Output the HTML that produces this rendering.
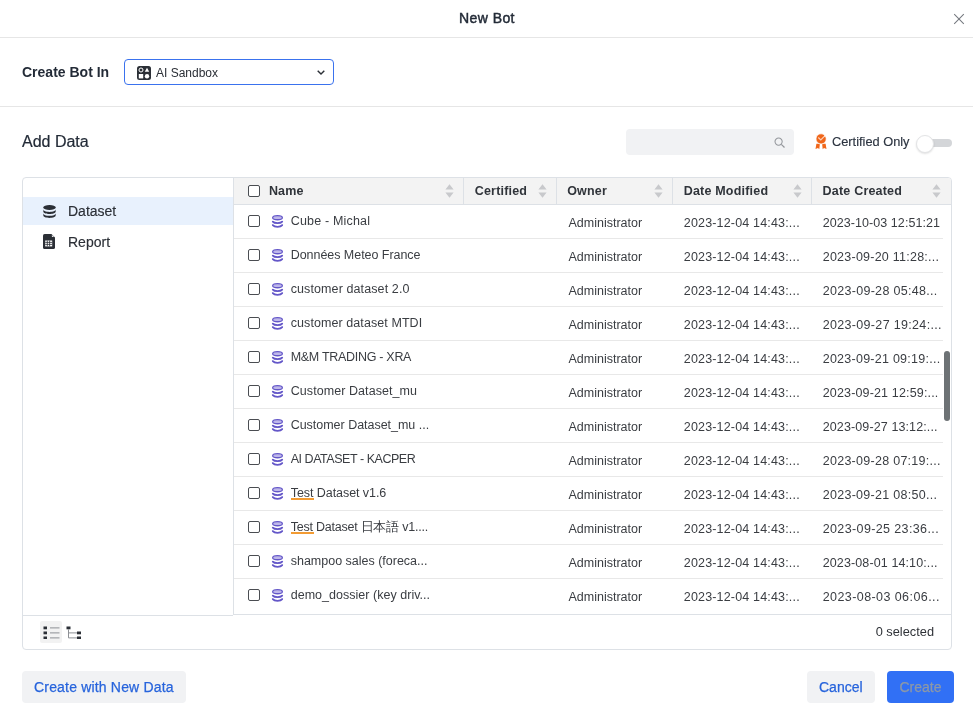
<!DOCTYPE html>
<html><head><meta charset="utf-8">
<style>
*{box-sizing:border-box;margin:0;padding:0}
html,body{width:973px;height:719px;overflow:hidden;background:#fff;font-family:"Liberation Sans",sans-serif;color:#2b2f36}
.a{position:absolute;white-space:nowrap}
.hdr-line{position:absolute;left:0;top:37px;width:973px;height:1px;background:#e6e6e6}
.title{left:0.5px;width:973px;text-align:center;top:10px;font-size:14px;font-weight:400;-webkit-text-stroke:0.45px currentColor;letter-spacing:0.42px;color:#232b37;line-height:16px}
.sec-line{position:absolute;left:0;top:106px;width:973px;height:1px;background:#e6e6e6}
.lbl{left:22px;top:63px;font-size:14px;font-weight:700;color:#232b37;line-height:18px}
.sel{position:absolute;left:124px;top:59px;width:210px;height:26px;border:1.5px solid #3a72ee;border-radius:4px;background:#fff}
.seltxt{left:156px;top:66px;font-size:12px;color:#2b2f36;line-height:15px}
.adddata{left:22px;top:132px;font-size:16px;color:#232b37;line-height:19px;-webkit-text-stroke:0.2px currentColor}
.search{position:absolute;left:626px;top:129px;width:168px;height:26px;background:#f1f2f4;border-radius:4px}
.cert{left:832px;top:134px;font-size:12.8px;color:#2c3440;line-height:15px;-webkit-text-stroke:0.15px currentColor}
.toggle-track{position:absolute;left:921px;top:139px;width:31px;height:8px;border-radius:4px;background:#d4d6d9}
.toggle-knob{position:absolute;left:916px;top:134.5px;width:18px;height:18px;border-radius:50%;background:#fff;border:1px solid #e3e4e6;box-shadow:0 1px 2px rgba(0,0,0,.12)}
.panel{position:absolute;left:22px;top:177px;width:930px;height:473px;border:1px solid #dde1e6;border-radius:4px;overflow:hidden}
.side-hl{position:absolute;left:0px;top:19px;width:210px;height:28px;background:#e8f1fd}
.side-txt{font-size:14px;color:#2b2f36;line-height:16px;-webkit-text-stroke:0.15px currentColor}
.vdiv{position:absolute;left:210px;top:0;width:1px;height:437px;background:#dde1e6}
.thead{position:absolute;left:211px;top:0;width:718px;height:27px;background:#f3f3f3;border-bottom:1px solid #dde1e6}
.th{font-size:12.5px;font-weight:700;color:#30343a;line-height:14px;top:6.3px;letter-spacing:0.2px}
.colsep{position:absolute;top:0;width:1px;height:26px;background:#dde1e6}
.sort{position:absolute;top:6px;width:9px;height:14px}
.row{position:absolute;left:211px;width:709px;height:1px;background:#e8e8e8}
.cb{position:absolute;width:12px;height:12px;border:1.3px solid #4a4d52;border-radius:2px;background:#fff}
.td{font-size:12.5px;color:#3a3d42;line-height:14px}
.nm{font-size:12.5px;color:#3a3d42;line-height:14px}
.foot-line{position:absolute;left:0;top:437px;width:210px;height:1px;background:#dde1e6}
.foot-line2{position:absolute;left:210px;top:436px;width:720px;height:1px;background:#dde1e6}
.btn2{position:absolute;background:#f1f2f4;border-radius:4px}
.btxt{font-size:14px;color:#2764dc;line-height:16px;-webkit-text-stroke:0.25px currentColor}
.primary{position:absolute;left:887px;top:671px;width:67px;height:32px;background:#3170f5;border-radius:4px}
</style></head>
<body>
<div id="root" style="position:absolute;left:0;top:0;width:973px;height:719px;background:#fff;will-change:transform">
<div class="a title">New Bot</div>
<svg class="a" style="left:953px;top:13px" width="12" height="12" viewBox="0 0 12 12"><path d="M1.2 1.2L10.8 10.8M10.8 1.2L1.2 10.8" stroke="#75797f" stroke-width="1.05" fill="none"/></svg>
<div class="hdr-line"></div>

<div class="a lbl">Create Bot In</div>
<div class="sel"></div>
<svg class="a" style="left:137px;top:66px" width="14" height="14" viewBox="0 0 14 14">
<rect x="0" y="0" width="14" height="14" rx="2.5" fill="#2b2f36"/>
<circle cx="4" cy="4" r="2" fill="none" stroke="#fff" stroke-width="1"/>
<path d="M10 1.8L12.2 5.8H7.8Z" fill="#fff"/>
<rect x="1.8" y="8" width="4.4" height="4.4" fill="#fff"/>
<circle cx="10" cy="10.2" r="2.2" fill="#fff"/>
</svg>
<div class="a seltxt">AI Sandbox</div>
<svg class="a" style="left:317px;top:70px" width="8" height="5" viewBox="0 0 8 5"><path d="M0.7 0.7L4 4L7.3 0.7" stroke="#2b2f36" stroke-width="1.4" fill="none"/></svg>
<div class="sec-line"></div>

<div class="a adddata">Add Data</div>
<div class="search"></div>
<svg class="a" style="left:774px;top:137px" width="11" height="11" viewBox="0 0 11 11"><circle cx="4.6" cy="4.6" r="3.6" fill="none" stroke="#94979c" stroke-width="1.05"/><path d="M7.3 7.3L10.5 10.5" stroke="#94979c" stroke-width="1.2"/></svg>
<svg class="a" style="left:815px;top:133px" width="12" height="17" viewBox="0 0 12 17"><path d="M1.4 10.8H4.9L4.3 16.2L3 14.9L0.5 16Z M7.1 10.8H10.6L11.5 16L9 14.9L7.7 16.2Z" fill="#f0661a"/><circle cx="6.1" cy="5.9" r="5.1" fill="#f0661a" stroke="#fff" stroke-width="0.7"/><path d="M3.3 4.5L5.8 7L10.6 2.2" stroke="#fbd0ba" stroke-width="1.2" fill="none"/><path d="M9.4 3.4L11.2 1.6" stroke="#fff" stroke-width="1.2"/></svg>
<div class="a cert">Certified Only</div>
<div class="toggle-track"></div>
<div class="toggle-knob"></div>

<div class="panel">
  <div class="side-hl"></div>
  <svg class="a" style="left:20px;top:27px" width="13" height="13" viewBox="0 0 13 13"><ellipse cx="6.5" cy="2.6" rx="6.2" ry="2.5" fill="#2b2f36"/><path d="M0.3 4.3C0.3 6 3 6.9 6.5 6.9S12.7 6 12.7 4.3V6.4C12.7 8 10 8.9 6.5 8.9S0.3 8 0.3 6.4Z" fill="#2b2f36"/><path d="M0.3 8.2C0.3 9.9 3 10.8 6.5 10.8S12.7 9.9 12.7 8.2V10.3C12.7 12 10 12.9 6.5 12.9S0.3 12 0.3 10.3Z" fill="#2b2f36"/></svg>
  <div class="a side-txt" style="left:45px;top:25px">Dataset</div>
  <svg class="a" style="left:20px;top:56px" width="12" height="15" viewBox="0 0 12 15"><path d="M1.6 0H8.4L12 3.6V13.4Q12 15 10.4 15H1.6Q0 15 0 13.4V1.6Q0 0 1.6 0Z" fill="#2b2f36"/><path d="M8.9 0.9L11.1 3.1H9.6Q8.9 3.1 8.9 2.4Z" fill="#e9eaec"/><rect x="2.2" y="6.5" width="7" height="5.9" fill="#fff"/><path d="M4.3 6.5V12.4M6.6 6.5V12.4M2.2 8.4H9.2M2.2 10.4H9.2" stroke="#2b2f36" stroke-width="0.8"/></svg>
  <div class="a side-txt" style="left:45px;top:56px">Report</div>
  <div class="vdiv"></div>
  <div class="foot-line"></div><div class="foot-line2"></div>
  <div class="thead"></div>
  <div id="tbl"><div class="a cb" style="left:225px;top:7px"></div>
<div class="a th" style="left:245.9px">Name</div>
<svg class="a sort" style="left:422.3px" width="9" height="14" viewBox="0 0 9 14"><path d="M4.5 0.3L8.6 5.6H0.4Z M4.5 13.7L8.6 8.4H0.4Z" fill="#c8c9cc"/></svg>
<div class="a th" style="left:451.7px">Certified</div>
<svg class="a sort" style="left:515.0px" width="9" height="14" viewBox="0 0 9 14"><path d="M4.5 0.3L8.6 5.6H0.4Z M4.5 13.7L8.6 8.4H0.4Z" fill="#c8c9cc"/></svg>
<div class="a th" style="left:544.2px">Owner</div>
<svg class="a sort" style="left:630.9px" width="9" height="14" viewBox="0 0 9 14"><path d="M4.5 0.3L8.6 5.6H0.4Z M4.5 13.7L8.6 8.4H0.4Z" fill="#c8c9cc"/></svg>
<div class="a th" style="left:660.7px">Date Modified</div>
<svg class="a sort" style="left:770.0px" width="9" height="14" viewBox="0 0 9 14"><path d="M4.5 0.3L8.6 5.6H0.4Z M4.5 13.7L8.6 8.4H0.4Z" fill="#c8c9cc"/></svg>
<div class="a th" style="left:799.6px">Date Created</div>
<svg class="a sort" style="left:909.3px" width="9" height="14" viewBox="0 0 9 14"><path d="M4.5 0.3L8.6 5.6H0.4Z M4.5 13.7L8.6 8.4H0.4Z" fill="#c8c9cc"/></svg>
<div class="colsep" style="left:440px"></div>
<div class="colsep" style="left:533px"></div>
<div class="colsep" style="left:649px"></div>
<div class="colsep" style="left:788px"></div>
<div class="a cb" style="left:225px;top:37px"></div>
<svg class="a" style="left:248px;top:36px" width="13" height="14" viewBox="0 0 13 14"><ellipse cx="6.5" cy="3.65" rx="4.85" ry="2.1" fill="#bfb8ea" stroke="#6457c8" stroke-width="1.3"/><path d="M1.8 7.6C2.6 8.6 4.3 9.1 6.5 9.1S10.4 8.6 11.2 7.6M1.8 11.1C2.6 12.2 4.3 12.8 6.5 12.8S10.4 12.2 11.2 11.1" stroke="#6457c8" stroke-width="1.8" fill="none" stroke-linecap="round"/></svg>
<div class="a nm" style="left:267.7px;top:35.8px;letter-spacing:0.183px">Cube - Michal</div>
<div class="a td" style="left:545.5px;top:37.6px">Administrator</div>
<div class="a td" style="left:660.8px;top:37.6px;letter-spacing:0.17px">2023-12-04 14:43:...</div>
<div class="a td" style="left:799.7px;top:37.6px;letter-spacing:0.067px">2023-10-03 12:51:21</div>
<div class="row" style="top:60px"></div>
<div class="a cb" style="left:225px;top:71px"></div>
<svg class="a" style="left:248px;top:70px" width="13" height="14" viewBox="0 0 13 14"><ellipse cx="6.5" cy="3.65" rx="4.85" ry="2.1" fill="#bfb8ea" stroke="#6457c8" stroke-width="1.3"/><path d="M1.8 7.6C2.6 8.6 4.3 9.1 6.5 9.1S10.4 8.6 11.2 7.6M1.8 11.1C2.6 12.2 4.3 12.8 6.5 12.8S10.4 12.2 11.2 11.1" stroke="#6457c8" stroke-width="1.8" fill="none" stroke-linecap="round"/></svg>
<div class="a nm" style="left:267.7px;top:69.8px;letter-spacing:-0.042px">Données Meteo France</div>
<div class="a td" style="left:545.5px;top:71.6px">Administrator</div>
<div class="a td" style="left:660.8px;top:71.6px;letter-spacing:0.17px">2023-12-04 14:43:...</div>
<div class="a td" style="left:799.7px;top:71.6px;letter-spacing:0.244px">2023-09-20 11:28:...</div>
<div class="row" style="top:94px"></div>
<div class="a cb" style="left:225px;top:105px"></div>
<svg class="a" style="left:248px;top:104px" width="13" height="14" viewBox="0 0 13 14"><ellipse cx="6.5" cy="3.65" rx="4.85" ry="2.1" fill="#bfb8ea" stroke="#6457c8" stroke-width="1.3"/><path d="M1.8 7.6C2.6 8.6 4.3 9.1 6.5 9.1S10.4 8.6 11.2 7.6M1.8 11.1C2.6 12.2 4.3 12.8 6.5 12.8S10.4 12.2 11.2 11.1" stroke="#6457c8" stroke-width="1.8" fill="none" stroke-linecap="round"/></svg>
<div class="a nm" style="left:267.7px;top:103.8px;letter-spacing:0.105px">customer dataset 2.0</div>
<div class="a td" style="left:545.5px;top:105.6px">Administrator</div>
<div class="a td" style="left:660.8px;top:105.6px;letter-spacing:0.17px">2023-12-04 14:43:...</div>
<div class="a td" style="left:799.7px;top:105.6px;letter-spacing:0.3px">2023-09-28 05:48...</div>
<div class="row" style="top:128px"></div>
<div class="a cb" style="left:225px;top:139px"></div>
<svg class="a" style="left:248px;top:138px" width="13" height="14" viewBox="0 0 13 14"><ellipse cx="6.5" cy="3.65" rx="4.85" ry="2.1" fill="#bfb8ea" stroke="#6457c8" stroke-width="1.3"/><path d="M1.8 7.6C2.6 8.6 4.3 9.1 6.5 9.1S10.4 8.6 11.2 7.6M1.8 11.1C2.6 12.2 4.3 12.8 6.5 12.8S10.4 12.2 11.2 11.1" stroke="#6457c8" stroke-width="1.8" fill="none" stroke-linecap="round"/></svg>
<div class="a nm" style="left:267.7px;top:137.8px;letter-spacing:0.08px">customer dataset MTDI</div>
<div class="a td" style="left:545.5px;top:139.6px">Administrator</div>
<div class="a td" style="left:660.8px;top:139.6px;letter-spacing:0.17px">2023-12-04 14:43:...</div>
<div class="a td" style="left:799.7px;top:139.6px;letter-spacing:0.328px">2023-09-27 19:24:...</div>
<div class="row" style="top:162px"></div>
<div class="a cb" style="left:225px;top:173px"></div>
<svg class="a" style="left:248px;top:172px" width="13" height="14" viewBox="0 0 13 14"><ellipse cx="6.5" cy="3.65" rx="4.85" ry="2.1" fill="#bfb8ea" stroke="#6457c8" stroke-width="1.3"/><path d="M1.8 7.6C2.6 8.6 4.3 9.1 6.5 9.1S10.4 8.6 11.2 7.6M1.8 11.1C2.6 12.2 4.3 12.8 6.5 12.8S10.4 12.2 11.2 11.1" stroke="#6457c8" stroke-width="1.8" fill="none" stroke-linecap="round"/></svg>
<div class="a nm" style="left:267.7px;top:171.8px;letter-spacing:-0.294px">M&amp;M TRADING - XRA</div>
<div class="a td" style="left:545.5px;top:173.6px">Administrator</div>
<div class="a td" style="left:660.8px;top:173.6px;letter-spacing:0.17px">2023-12-04 14:43:...</div>
<div class="a td" style="left:799.7px;top:173.6px;letter-spacing:0.256px">2023-09-21 09:19:...</div>
<div class="row" style="top:196px"></div>
<div class="a cb" style="left:225px;top:207px"></div>
<svg class="a" style="left:248px;top:206px" width="13" height="14" viewBox="0 0 13 14"><ellipse cx="6.5" cy="3.65" rx="4.85" ry="2.1" fill="#bfb8ea" stroke="#6457c8" stroke-width="1.3"/><path d="M1.8 7.6C2.6 8.6 4.3 9.1 6.5 9.1S10.4 8.6 11.2 7.6M1.8 11.1C2.6 12.2 4.3 12.8 6.5 12.8S10.4 12.2 11.2 11.1" stroke="#6457c8" stroke-width="1.8" fill="none" stroke-linecap="round"/></svg>
<div class="a nm" style="left:267.7px;top:205.8px;letter-spacing:0.072px">Customer Dataset_mu</div>
<div class="a td" style="left:545.5px;top:207.6px">Administrator</div>
<div class="a td" style="left:660.8px;top:207.6px;letter-spacing:0.17px">2023-12-04 14:43:...</div>
<div class="a td" style="left:799.7px;top:207.6px;letter-spacing:0.161px">2023-09-21 12:59:...</div>
<div class="row" style="top:230px"></div>
<div class="a cb" style="left:225px;top:241px"></div>
<svg class="a" style="left:248px;top:240px" width="13" height="14" viewBox="0 0 13 14"><ellipse cx="6.5" cy="3.65" rx="4.85" ry="2.1" fill="#bfb8ea" stroke="#6457c8" stroke-width="1.3"/><path d="M1.8 7.6C2.6 8.6 4.3 9.1 6.5 9.1S10.4 8.6 11.2 7.6M1.8 11.1C2.6 12.2 4.3 12.8 6.5 12.8S10.4 12.2 11.2 11.1" stroke="#6457c8" stroke-width="1.8" fill="none" stroke-linecap="round"/></svg>
<div class="a nm" style="left:267.7px;top:239.8px;letter-spacing:-0.023px">Customer Dataset_mu ...</div>
<div class="a td" style="left:545.5px;top:241.6px">Administrator</div>
<div class="a td" style="left:660.8px;top:241.6px;letter-spacing:0.17px">2023-12-04 14:43:...</div>
<div class="a td" style="left:799.7px;top:241.6px;letter-spacing:0.117px">2023-09-27 13:12:...</div>
<div class="row" style="top:264px"></div>
<div class="a cb" style="left:225px;top:275px"></div>
<svg class="a" style="left:248px;top:274px" width="13" height="14" viewBox="0 0 13 14"><ellipse cx="6.5" cy="3.65" rx="4.85" ry="2.1" fill="#bfb8ea" stroke="#6457c8" stroke-width="1.3"/><path d="M1.8 7.6C2.6 8.6 4.3 9.1 6.5 9.1S10.4 8.6 11.2 7.6M1.8 11.1C2.6 12.2 4.3 12.8 6.5 12.8S10.4 12.2 11.2 11.1" stroke="#6457c8" stroke-width="1.8" fill="none" stroke-linecap="round"/></svg>
<div class="a nm" style="left:267.7px;top:273.8px;letter-spacing:-0.461px">AI DATASET - KACPER</div>
<div class="a td" style="left:545.5px;top:275.6px">Administrator</div>
<div class="a td" style="left:660.8px;top:275.6px;letter-spacing:0.17px">2023-12-04 14:43:...</div>
<div class="a td" style="left:799.7px;top:275.6px;letter-spacing:0.278px">2023-09-28 07:19:...</div>
<div class="row" style="top:298px"></div>
<div class="a cb" style="left:225px;top:309px"></div>
<svg class="a" style="left:248px;top:308px" width="13" height="14" viewBox="0 0 13 14"><ellipse cx="6.5" cy="3.65" rx="4.85" ry="2.1" fill="#bfb8ea" stroke="#6457c8" stroke-width="1.3"/><path d="M1.8 7.6C2.6 8.6 4.3 9.1 6.5 9.1S10.4 8.6 11.2 7.6M1.8 11.1C2.6 12.2 4.3 12.8 6.5 12.8S10.4 12.2 11.2 11.1" stroke="#6457c8" stroke-width="1.8" fill="none" stroke-linecap="round"/></svg>
<div class="a nm" style="left:267.7px;top:307.8px;letter-spacing:-0.062px"><span style="position:relative">Test<span style="position:absolute;left:0.3px;width:23.4px;top:12px;height:2px;background:#f29b33"></span></span> Dataset v1.6</div>
<div class="a td" style="left:545.5px;top:309.6px">Administrator</div>
<div class="a td" style="left:660.8px;top:309.6px;letter-spacing:0.17px">2023-12-04 14:43:...</div>
<div class="a td" style="left:799.7px;top:309.6px;letter-spacing:0.283px">2023-09-21 08:50...</div>
<div class="row" style="top:332px"></div>
<div class="a cb" style="left:225px;top:343px"></div>
<svg class="a" style="left:248px;top:342px" width="13" height="14" viewBox="0 0 13 14"><ellipse cx="6.5" cy="3.65" rx="4.85" ry="2.1" fill="#bfb8ea" stroke="#6457c8" stroke-width="1.3"/><path d="M1.8 7.6C2.6 8.6 4.3 9.1 6.5 9.1S10.4 8.6 11.2 7.6M1.8 11.1C2.6 12.2 4.3 12.8 6.5 12.8S10.4 12.2 11.2 11.1" stroke="#6457c8" stroke-width="1.8" fill="none" stroke-linecap="round"/></svg>
<div class="a nm" style="left:267.7px;top:341.8px;letter-spacing:-0.232px"><span style="position:relative">Test<span style="position:absolute;left:0.3px;width:23.4px;top:12px;height:2px;background:#f29b33"></span></span> Dataset 日本語 v1....</div>
<div class="a td" style="left:545.5px;top:343.6px">Administrator</div>
<div class="a td" style="left:660.8px;top:343.6px;letter-spacing:0.17px">2023-12-04 14:43:...</div>
<div class="a td" style="left:799.7px;top:343.6px;letter-spacing:0.378px">2023-09-25 23:36...</div>
<div class="row" style="top:366px"></div>
<div class="a cb" style="left:225px;top:377px"></div>
<svg class="a" style="left:248px;top:376px" width="13" height="14" viewBox="0 0 13 14"><ellipse cx="6.5" cy="3.65" rx="4.85" ry="2.1" fill="#bfb8ea" stroke="#6457c8" stroke-width="1.3"/><path d="M1.8 7.6C2.6 8.6 4.3 9.1 6.5 9.1S10.4 8.6 11.2 7.6M1.8 11.1C2.6 12.2 4.3 12.8 6.5 12.8S10.4 12.2 11.2 11.1" stroke="#6457c8" stroke-width="1.8" fill="none" stroke-linecap="round"/></svg>
<div class="a nm" style="left:267.7px;top:375.8px;letter-spacing:-0.005px">shampoo sales (foreca...</div>
<div class="a td" style="left:545.5px;top:377.6px">Administrator</div>
<div class="a td" style="left:660.8px;top:377.6px;letter-spacing:0.17px">2023-12-04 14:43:...</div>
<div class="a td" style="left:799.7px;top:377.6px;letter-spacing:0.117px">2023-08-01 14:10:...</div>
<div class="row" style="top:400px"></div>
<div class="a cb" style="left:225px;top:411px"></div>
<svg class="a" style="left:248px;top:410px" width="13" height="14" viewBox="0 0 13 14"><ellipse cx="6.5" cy="3.65" rx="4.85" ry="2.1" fill="#bfb8ea" stroke="#6457c8" stroke-width="1.3"/><path d="M1.8 7.6C2.6 8.6 4.3 9.1 6.5 9.1S10.4 8.6 11.2 7.6M1.8 11.1C2.6 12.2 4.3 12.8 6.5 12.8S10.4 12.2 11.2 11.1" stroke="#6457c8" stroke-width="1.8" fill="none" stroke-linecap="round"/></svg>
<div class="a nm" style="left:267.7px;top:409.8px;letter-spacing:0.026px">demo_dossier (key driv...</div>
<div class="a td" style="left:545.5px;top:411.6px">Administrator</div>
<div class="a td" style="left:660.8px;top:411.6px;letter-spacing:0.17px">2023-12-04 14:43:...</div>
<div class="a td" style="left:799.7px;top:411.6px;letter-spacing:0.422px">2023-08-03 06:06...</div>
<div style="position:absolute;left:921px;top:173px;width:6px;height:70px;border-radius:3px;background:#6d7275"></div></div><!--/tbl-->
  <!-- footer icons -->
  <div style="position:absolute;left:17px;top:443px;width:22px;height:22px;background:#f2f2f2;border-radius:2px"></div>
  <svg class="a" style="left:20px;top:447.5px" width="17" height="13" viewBox="0 0 17 13"><g fill="#2b2f36"><rect x="0.5" y="0.5" width="3.5" height="2.8"/><rect x="0.5" y="5.5" width="3.5" height="2.8"/><rect x="0.5" y="10.5" width="3.5" height="2.8"/></g><g stroke="#8d9095" stroke-width="1"><path d="M7 1.9H16.5M7 6.9H16.5M7 11.9H16.5"/></g></svg>
  <svg class="a" style="left:43px;top:447.5px" width="17" height="13" viewBox="0 0 17 13"><g fill="#2b2f36"><rect x="0.5" y="0.5" width="4" height="2.8"/><rect x="11" y="5.5" width="4" height="2.8"/><rect x="11" y="10.5" width="4" height="2.8"/></g><path d="M2.5 3.3V11.9H11M2.5 6.9H11" stroke="#8d9095" stroke-width="1" fill="none"/></svg>
  <div class="a td" style="right:17px;top:447px;font-size:12.8px;color:#2f3237">0 selected</div>
</div>

<div class="btn2" style="left:22px;top:671px;width:164px;height:32px"></div>
<div class="a btxt" style="left:34px;top:679px;letter-spacing:0.18px">Create with New Data</div>
<div class="btn2" style="left:807px;top:671px;width:68px;height:32px"></div>
<div class="a btxt" style="left:819px;top:679px">Cancel</div>
<div class="primary"></div>
<div class="a btxt" style="left:899.5px;top:679px;color:#8c98a8">Create</div>
</div>
</body></html>
